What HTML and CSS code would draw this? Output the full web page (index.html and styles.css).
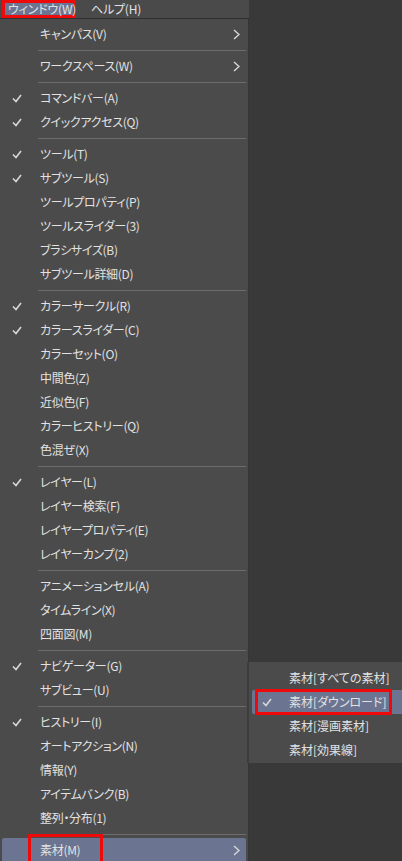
FILE: index.html
```html
<!DOCTYPE html>
<html lang="ja">
<head>
<meta charset="utf-8">
<link rel="stylesheet" href="styles.css">
</head>
<body>
<div class="screen">
  <div class="left">
    <div class="menubar">
      <div class="mb-item active">ウィンドウ(W)</div>
      <div class="mb-item">ヘルプ(H)</div>
    </div>
    <div class="menu">
      <div class="item"><span class="chk"></span><span class="label">キャンパス(V)</span><svg class="arrow" viewBox="0 0 7 11" width="7" height="11"><polyline points="1,1 6,5.5 1,10"/></svg></div>
      <div class="sep"></div>
      <div class="item"><span class="chk"></span><span class="label">ワークスペース(W)</span><svg class="arrow" viewBox="0 0 7 11" width="7" height="11"><polyline points="1,1 6,5.5 1,10"/></svg></div>
      <div class="sep"></div>
      <div class="item"><span class="chk"><svg viewBox="0 0 10 9" width="10" height="9"><polyline points="1,4.5 4,7.5 9,1"/></svg></span><span class="label">コマンドバー(A)</span></div>
      <div class="item"><span class="chk"><svg viewBox="0 0 10 9" width="10" height="9"><polyline points="1,4.5 4,7.5 9,1"/></svg></span><span class="label">クイックアクセス(Q)</span></div>
      <div class="sep"></div>
      <div class="item"><span class="chk"><svg viewBox="0 0 10 9" width="10" height="9"><polyline points="1,4.5 4,7.5 9,1"/></svg></span><span class="label">ツール(T)</span></div>
      <div class="item"><span class="chk"><svg viewBox="0 0 10 9" width="10" height="9"><polyline points="1,4.5 4,7.5 9,1"/></svg></span><span class="label">サブツール(S)</span></div>
      <div class="item"><span class="chk"></span><span class="label">ツールプロパティ(P)</span></div>
      <div class="item"><span class="chk"></span><span class="label">ツールスライダー(3)</span></div>
      <div class="item"><span class="chk"></span><span class="label">ブラシサイズ(B)</span></div>
      <div class="item"><span class="chk"></span><span class="label">サブツール詳細(D)</span></div>
      <div class="sep"></div>
      <div class="item"><span class="chk"><svg viewBox="0 0 10 9" width="10" height="9"><polyline points="1,4.5 4,7.5 9,1"/></svg></span><span class="label">カラーサークル(R)</span></div>
      <div class="item"><span class="chk"><svg viewBox="0 0 10 9" width="10" height="9"><polyline points="1,4.5 4,7.5 9,1"/></svg></span><span class="label">カラースライダー(C)</span></div>
      <div class="item"><span class="chk"></span><span class="label">カラーセット(O)</span></div>
      <div class="item"><span class="chk"></span><span class="label">中間色(Z)</span></div>
      <div class="item"><span class="chk"></span><span class="label">近似色(F)</span></div>
      <div class="item"><span class="chk"></span><span class="label">カラーヒストリー(Q)</span></div>
      <div class="item"><span class="chk"></span><span class="label">色混ぜ(X)</span></div>
      <div class="sep"></div>
      <div class="item"><span class="chk"><svg viewBox="0 0 10 9" width="10" height="9"><polyline points="1,4.5 4,7.5 9,1"/></svg></span><span class="label">レイヤー(L)</span></div>
      <div class="item"><span class="chk"></span><span class="label">レイヤー検索(F)</span></div>
      <div class="item"><span class="chk"></span><span class="label">レイヤープロパティ(E)</span></div>
      <div class="item"><span class="chk"></span><span class="label">レイヤーカンプ(2)</span></div>
      <div class="sep"></div>
      <div class="item"><span class="chk"></span><span class="label">アニメーションセル(A)</span></div>
      <div class="item"><span class="chk"></span><span class="label">タイムライン(X)</span></div>
      <div class="item"><span class="chk"></span><span class="label">四面図(M)</span></div>
      <div class="sep"></div>
      <div class="item"><span class="chk"><svg viewBox="0 0 10 9" width="10" height="9"><polyline points="1,4.5 4,7.5 9,1"/></svg></span><span class="label">ナビゲーター(G)</span></div>
      <div class="item"><span class="chk"></span><span class="label">サブビュー(U)</span></div>
      <div class="sep"></div>
      <div class="item"><span class="chk"><svg viewBox="0 0 10 9" width="10" height="9"><polyline points="1,4.5 4,7.5 9,1"/></svg></span><span class="label">ヒストリー(I)</span></div>
      <div class="item"><span class="chk"></span><span class="label">オートアクション(N)</span></div>
      <div class="item"><span class="chk"></span><span class="label">情報(Y)</span></div>
      <div class="item"><span class="chk"></span><span class="label">アイテムバンク(B)</span></div>
      <div class="item"><span class="chk"></span><span class="label">整列・分布(1)</span></div>
      <div class="sep"></div>
      <div class="item hl"><span class="chk"></span><span class="label boxed">素材(M)</span><svg class="arrow" viewBox="0 0 7 11" width="7" height="11"><polyline points="1,1 6,5.5 1,10"/></svg></div>
    </div>
  </div>
  <div class="right"></div>
  <div class="submenu">
    <div class="item"><span class="chk"></span><span class="label">素材[すべての素材]</span></div>
    <div class="item hl boxed-row"><span class="chk"><svg viewBox="0 0 10 9" width="10" height="9"><polyline points="1,4.5 4,7.5 9,1"/></svg></span><span class="label">素材[ダウンロード]</span></div>
    <div class="item"><span class="chk"></span><span class="label">素材[漫画素材]</span></div>
    <div class="item"><span class="chk"></span><span class="label">素材[効果線]</span></div>
  </div>
</div>
</body>
</html>
```

FILE: styles.css
```css
* { box-sizing: border-box; }
html, body { margin: 0; padding: 0; }
body {
  background: #393939;
  font-family: "Noto Sans CJK JP", "Noto Sans", sans-serif;
  font-size: 12px;
  color: #e2e2e2;
  font-feature-settings: "palt";
}
.screen {
  position: relative;
  display: flex;
  width: 402px;
  height: 861px;
  overflow: hidden;
}
.left {
  width: 249px;
  flex: none;
  display: flex;
  flex-direction: column;
}
.right { flex: 1; background: #393939; }

.menubar {
  height: 19px;
  display: flex;
  background: #4a4a4a;
  border-bottom: 1px solid #2f2f2f;
}
.mb-item {
  height: 18px;
  line-height: 18px;
  white-space: nowrap;
  letter-spacing: -0.2px;
}
.mb-item.active {
  margin-left: 2px;
  width: 74px;
  padding-left: 6px;
  background: #6b7591;
  box-shadow: inset 0 0 0 3px #ee0a0a;
}
.mb-item + .mb-item { padding-left: 15px; }

.menu {
  flex: 1;
  background: #4b4b4b;
  border-right: 1px solid #363636;
  padding-top: 3px;
}
.item {
  height: 24px;
  display: flex;
  align-items: center;
  margin: 0 2px;
  white-space: nowrap;
}
.chk {
  width: 38px;
  flex: none;
  padding-left: 10px;
  display: flex;
  align-items: center;
}
.chk svg, .arrow {
  fill: none;
  stroke: #d8d8d8;
  stroke-width: 1.6;
}
.label {
  flex: 1;
  line-height: 24px;
  letter-spacing: -0.3px;
}
.arrow {
  margin-right: 6px;
  stroke-width: 1.4;
}
.sep {
  height: 8px;
  display: flex;
  align-items: center;
  margin: 0 2px 0 38px;
}
.sep::before {
  content: "";
  flex: 1;
  height: 1px;
  background: #6c6c6c;
}
.item.hl {
  background: #6b7591;
  border-radius: 2px;
}
.label.boxed {
  position: relative;
}
.label.boxed::after {
  content: "";
  position: absolute;
  left: -12px;
  top: -4px;
  width: 69px;
  bottom: -4px;
  border: 3px solid #ee0a0a;
}

.submenu {
  position: absolute;
  left: 249px;
  top: 662px;
  width: 160px;
  background: #4b4b4b;
  padding: 4px 0 1px;
  box-shadow: -2px 0 0 #3d3d3d;
}
.submenu .item {
  margin: 0 0 0 3px;
}
.submenu .chk {
  width: 37px;
}
.submenu .label { letter-spacing: 0; }
.boxed-row { position: relative; }
.boxed-row::after {
  content: "";
  position: absolute;
  left: 3px;
  top: -1px;
  bottom: -1px;
  width: 131px;
  border: 3px solid #ee0a0a;
}
```
